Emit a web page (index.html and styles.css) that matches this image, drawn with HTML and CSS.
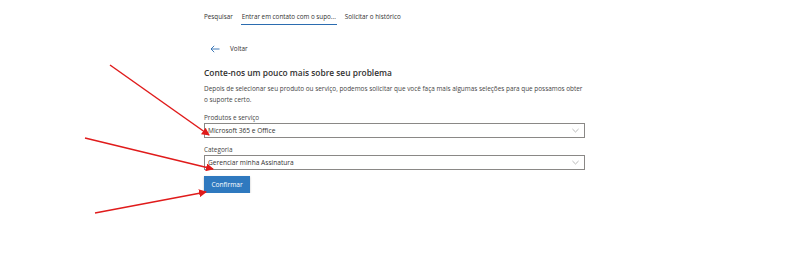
FILE: index.html
```html
<!DOCTYPE html>
<html lang="pt-BR">
<head>
  <meta charset="UTF-8" />
  <meta name="viewport" content="width=device-width, initial-scale=1.0"/>
  <title>Suporte - Contato</title>
  <link rel="stylesheet" href="styles.css">
</head>
<body>
  <div class="page">
    <nav class="tabs">
      <a class="tab" href="#">Pesquisar</a>
      <a class="tab active" href="#">Entrar em contato com o supo...</a>
      <a class="tab" href="#">Solicitar o histórico</a>
    </nav>

    <a class="back-link" href="#">
      <svg class="back-icon" viewBox="0 0 10 8" width="10" height="8">
        <path d="M9.5 4H1M4.2 0.8L1 4l3.2 3.2" fill="none" stroke="#2b6cb0" stroke-width="0.9"/>
      </svg>
      <span>Voltar</span>
    </a>

    <h1>Conte-nos um pouco mais sobre seu problema</h1>
    <p class="intro">Depois de selecionar seu produto ou serviço, podemos solicitar que você faça mais algumas seleções para que possamos obter o suporte certo.</p>

    <label class="field-label">Produtos e serviço</label>
    <div class="select">
      <span>Microsoft 365 e Office</span>
      <svg class="chevron" viewBox="0 0 8 5" width="7" height="5"><path d="M0.5 0.8L4 4.2 7.5 0.8" fill="none" stroke="#999" stroke-width="0.8"/></svg>
    </div>

    <label class="field-label">Categoria</label>
    <div class="select">
      <span>Gerenciar minha Assinatura</span>
      <svg class="chevron" viewBox="0 0 8 5" width="7" height="5"><path d="M0.5 0.8L4 4.2 7.5 0.8" fill="none" stroke="#999" stroke-width="0.8"/></svg>
    </div>

    <button class="confirm-btn">Confirmar</button>
  </div>

  <!-- red annotation arrows drawn over the form -->
  <svg class="annotations" width="800" height="267" viewBox="0 0 800 267">
    <defs>
      <marker id="head" markerWidth="8" markerHeight="8" refX="7" refY="4" orient="auto" markerUnits="userSpaceOnUse">
        <path d="M0 0L8 4 0 8z" fill="#e01b1b"/>
      </marker>
    </defs>
    <line x1="110" y1="65" x2="209" y2="135" stroke="#e01b1b" stroke-width="1.5" marker-end="url(#head)"/>
    <line x1="85" y1="138" x2="213" y2="169" stroke="#e01b1b" stroke-width="1.5" marker-end="url(#head)"/>
    <line x1="95" y1="213" x2="206" y2="192" stroke="#e01b1b" stroke-width="1.5" marker-end="url(#head)"/>
  </svg>
</body>
</html>
```

FILE: styles.css
```css
body {
  margin: 0;
  font-family: 'Open Sans', sans-serif;
  background-color: #ffffff;
  color: #323130;
}

.page {
  width: 381px;
  margin-left: 204px;
  display: flex;
  flex-direction: column;
  align-items: flex-start;
}

.tabs {
  display: flex;
  gap: 8px;
  padding-top: 11px;
  height: 15px;
}

.tab {
  font-size: 6.3px;
  color: #323130;
  text-decoration: none;
  line-height: 12px;
  height: 14px;
  box-sizing: border-box;
}

.tab.active {
  border-bottom: 1px solid #2b6cb0;
  padding: 0 1px;
}

.back-link {
  display: flex;
  align-items: center;
  gap: 10px;
  margin-top: 18px;
  margin-left: 6px;
  font-size: 6.4px;
  color: #323130;
  text-decoration: none;
}

.back-icon {
  display: block;
}

h1 {
  font-size: 8.4px;
  font-weight: 600;
  margin: 13px 0 0;
  line-height: 13px;
}

.intro {
  font-size: 6.4px;
  line-height: 11px;
  margin: 4px 0 1px;
  color: #444;
}

.field-label {
  font-size: 6.4px;
  color: #444;
  margin-top: 6px;
  line-height: 11px;
}

.select {
  width: 100%;
  height: 15px;
  box-sizing: border-box;
  border: 1px solid #8a8886;
  display: flex;
  align-items: center;
  justify-content: space-between;
  padding: 0 5px 0 3px;
  font-size: 6.6px;
  color: #323130;
}

.chevron {
  display: block;
}

.confirm-btn {
  margin-top: 6px;
  width: 46px;
  height: 17px;
  background-color: #2f79bf;
  color: #ffffff;
  border: none;
  font-family: 'Open Sans', sans-serif;
  font-size: 6.6px;
  padding: 0;
  box-shadow: 0 1px 2px rgba(0,0,0,0.25);
}

.annotations {
  position: absolute;
  top: 0;
  left: 0;
  pointer-events: none;
}
```
